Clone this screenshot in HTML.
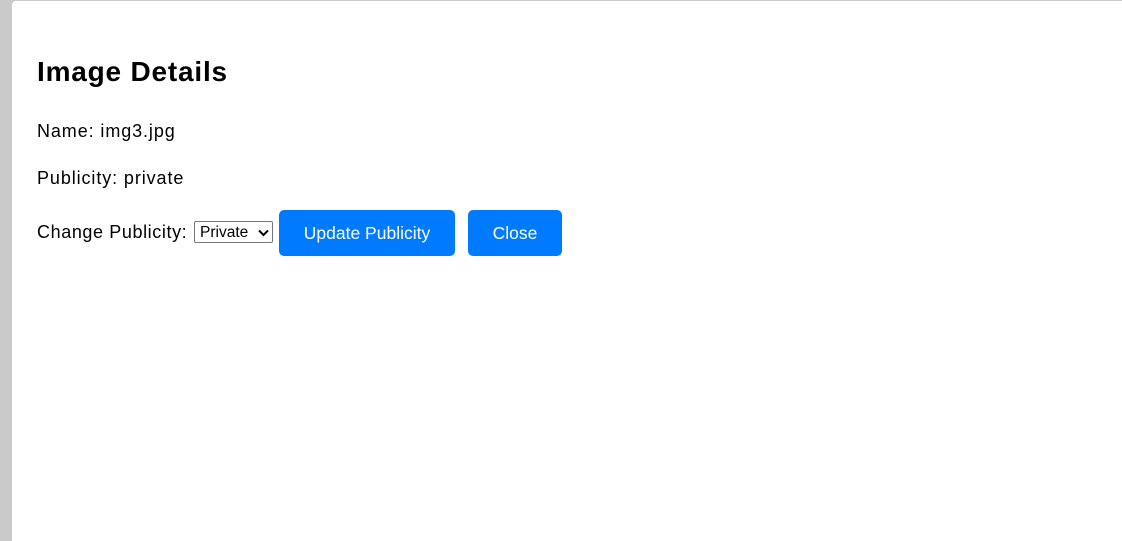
<!DOCTYPE html>
<html><head><style>
html,body{margin:0;padding:0;width:1122px;height:527px;overflow:hidden;background:#cacacb;font-family:"Liberation Sans",sans-serif;}
.panel{position:absolute;left:12px;top:1px;width:1120px;height:540px;background:#fff;border-top-left-radius:4px;}
.t{position:absolute;left:37px;color:#000;white-space:nowrap;letter-spacing:0.9px;}
h1{position:absolute;left:37px;top:56px;margin:0;font-size:28px;font-weight:bold;line-height:32px;letter-spacing:0.8px;}
.btn{position:absolute;top:210px;height:46px;background:#007bff;color:#fff;border-radius:5px;font-size:17.5px;line-height:46px;text-align:center;}
.sel{position:absolute;left:194px;top:221px;width:77px;height:20px;border:1px solid #767676;border-radius:2px;font-size:15.5px;line-height:21px;box-sizing:content-box;}
</style></head><body>
<div class="panel"></div>
<h1>Image Details</h1>
<div class="t" style="top:119px;font-size:18px;line-height:24px;">Name: img3.jpg</div>
<div class="t" style="top:166px;font-size:18px;line-height:24px;">Publicity: private</div>
<div class="t" style="top:220px;font-size:18px;line-height:24px;letter-spacing:0.6px;">Change Publicity:</div>
<div class="sel"><span style="position:absolute;left:5px;top:0;">Private</span>
<svg style="position:absolute;left:63px;top:7px" width="11" height="8" viewBox="0 0 11 8"><path d="M1 1.5 L5.5 6 L10 1.5" stroke="#000" stroke-width="2" fill="none"/></svg></div>
<div class="btn" style="left:279px;width:176px;">Update Publicity</div>
<div class="btn" style="left:468px;width:94px;">Close</div>
</body></html>
